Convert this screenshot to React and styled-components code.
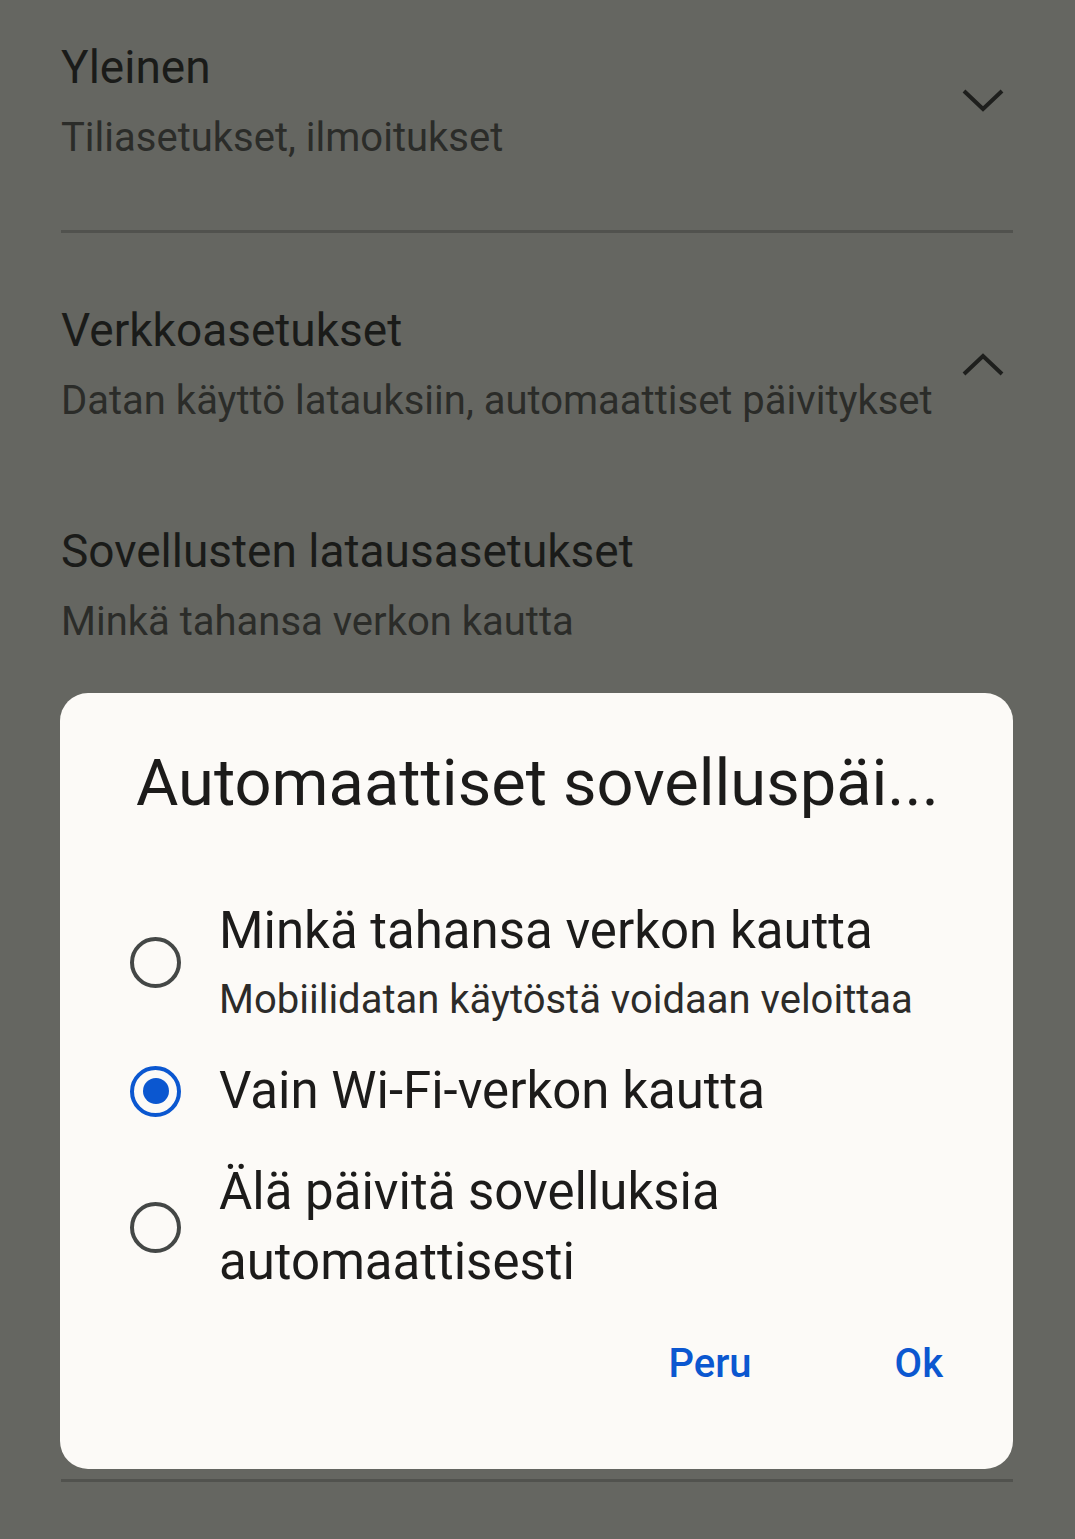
import React from 'react';
import styled, { createGlobalStyle } from 'styled-components';

const GlobalStyle = createGlobalStyle`
	html, body {
		margin: 0;
		padding: 0;
		background: #656661;
	}
	body {
		font-family: Roboto, "Liberation Sans", sans-serif;
		color: #1b1c1a;
	}
`;

const Page = styled.main`
	width: 1075px;
	min-height: 1539px;
	box-sizing: border-box;
	padding: 0 62px 0 61px;
	background: #656661;
	overflow: hidden;
`;

const Section = styled.section`
	display: flex;
	align-items: center;
	justify-content: space-between;
	padding: ${p => p.$pad};
`;

const Texts = styled.div`
	display: flex;
	flex-direction: column;
`;

const Title = styled.div`
	font-size: 46px;
	line-height: 60px;
	color: #1a1b19;
`;

const Subtitle = styled.div`
	margin-top: 15px;
	font-size: 40px;
	line-height: 52px;
	color: #2b2c29;
`;

const Chevron = styled.svg`
	flex: none;
	width: 44px;
	height: 28px;
	margin-right: 8px;
`;

const Divider = styled.div`
	height: 3px;
	background: #51524e;
`;

const Dialog = styled.div`
	margin: 45px 0 10px -1px;
	background: #fcfaf7;
	border-radius: 28px;
	padding: 50px 70px 77px 70px;
	display: flex;
	flex-direction: column;
`;

const DialogTitle = styled.h2`
	margin: 0 0 76px 6px;
	font-size: 65px;
	line-height: 80px;
	font-weight: 400;
	color: #1c1b1a;
	white-space: nowrap;
`;

const Options = styled.div`
	display: flex;
	flex-direction: column;
	gap: 34px;
`;

const Option = styled.label`
	display: flex;
	align-items: center;
	gap: 38px;
`;

const Radio = styled.span`
	flex: none;
	box-sizing: border-box;
	width: 51px;
	height: 51px;
	border-radius: 50%;
	border: 4.5px solid ${p => (p.$checked ? '#0b57d0' : '#444746')};
	display: flex;
	align-items: center;
	justify-content: center;
	&::after {
		content: '';
		width: 26px;
		height: 26px;
		border-radius: 50%;
		background: ${p => (p.$checked ? '#0b57d0' : 'transparent')};
	}
`;

const OptionLabel = styled.div`
	font-size: 51px;
	line-height: ${p => (p.$multi ? 70 : 64)}px;
	color: #1c1b1a;
`;

const OptionHint = styled.div`
	margin-top: 12px;
	font-size: 40px;
	line-height: 50px;
	color: #2c2b29;
`;

const Actions = styled.div`
	display: flex;
	justify-content: flex-end;
	gap: 143px;
	margin-top: 39px;
`;

const TextButton = styled.button`
	border: 0;
	background: none;
	padding: 0;
	font-family: inherit;
	font-size: 40px;
	line-height: 56px;
	font-weight: 500;
	color: #0b57d0;
`;

const ChevronIcon = ({ up }) => (
	<Chevron viewBox="0 0 44 28">
		<polyline
			points={up ? '3,24 22,6 41,24' : '3,4 22,22 41,4'}
			fill="none"
			stroke="#1e1f1d"
			strokeWidth="4"
		/>
	</Chevron>
);

const options = [
	{ id: 'any', label: 'Minkä tahansa verkon kautta', hint: 'Mobiilidatan käytöstä voidaan veloittaa' },
	{ id: 'wifi', label: 'Vain Wi-Fi-verkon kautta', checked: true },
	{ id: 'never', label: 'Älä päivitä sovelluksia automaattisesti', multi: true },
];

export default function App() {
	return (
		<Page>
			<GlobalStyle />
			<Section $pad="37px 0 66px">
				<Texts>
					<Title>Yleinen</Title>
					<Subtitle>Tiliasetukset, ilmoitukset</Subtitle>
				</Texts>
				<ChevronIcon />
			</Section>
			<Divider />
			<Section $pad="67px 0 0">
				<Texts>
					<Title>Verkkoasetukset</Title>
					<Subtitle>Datan käyttö latauksiin, automaattiset päivitykset</Subtitle>
				</Texts>
				<ChevronIcon up />
			</Section>
			<Section $pad="94px 0 0">
				<Texts>
					<Title>Sovellusten latausasetukset</Title>
					<Subtitle>Minkä tahansa verkon kautta</Subtitle>
				</Texts>
			</Section>
			<Dialog>
				<DialogTitle>Automaattiset sovelluspäi...</DialogTitle>
				<Options>
					{options.map(o => (
						<Option key={o.id}>
							<Radio $checked={o.checked} />
							<Texts>
								<OptionLabel $multi={o.multi}>
									{o.multi ? (
										<>Älä päivitä sovelluksia<br />automaattisesti</>
									) : o.label}
								</OptionLabel>
								{o.hint && <OptionHint>{o.hint}</OptionHint>}
							</Texts>
						</Option>
					))}
				</Options>
				<Actions>
					<TextButton>Peru</TextButton>
					<TextButton>Ok</TextButton>
				</Actions>
			</Dialog>
			<Divider />
		</Page>
	);
}
